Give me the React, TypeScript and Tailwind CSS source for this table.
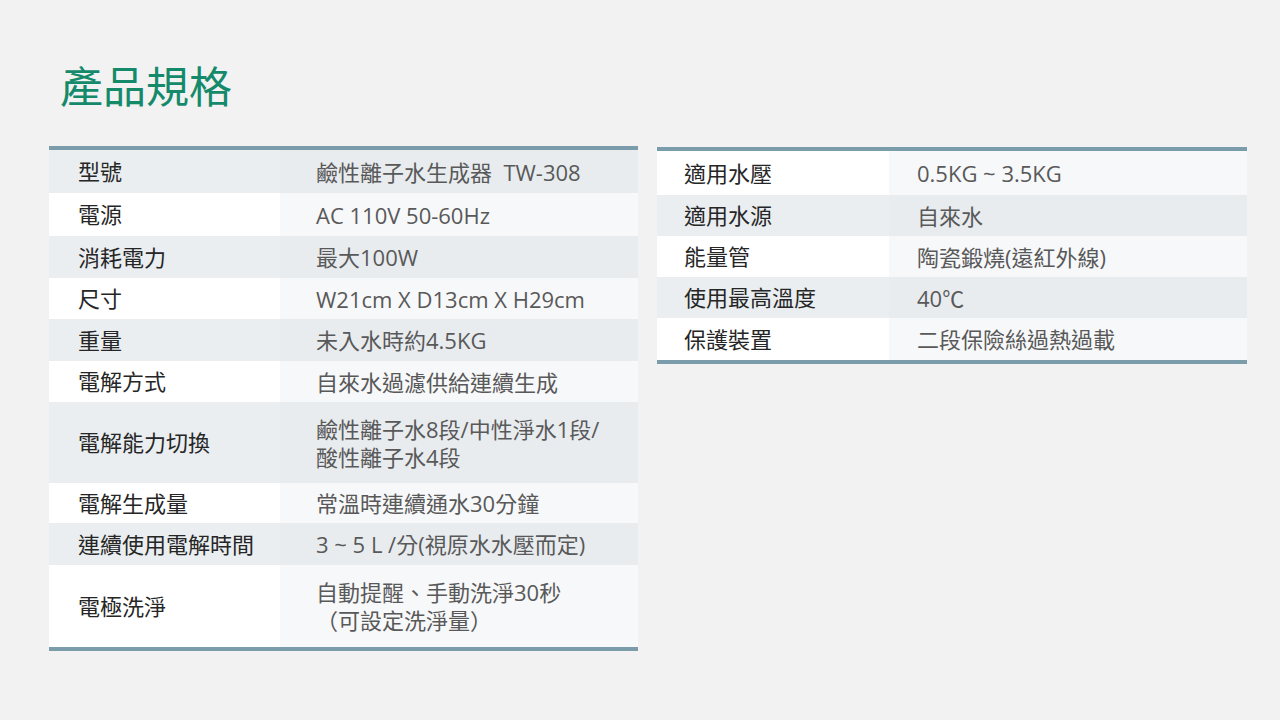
const font = "font-['Open_Sans','Noto_Sans_CJK_TC',sans-serif]";

type Row = { label: string; value: string[]; h: string; shade: boolean };

const leftRows: Row[] = [
  { label: "型號", value: ["鹼性離子水生成器  TW-308"], h: "h-[43px]", shade: true },
  { label: "電源", value: ["AC 110V 50-60Hz"], h: "h-[43px]", shade: false },
  { label: "消耗電力", value: ["最大100W"], h: "h-[42px]", shade: true },
  { label: "尺寸", value: ["W21cm X D13cm X H29cm"], h: "h-[41px]", shade: false },
  { label: "重量", value: ["未入水時約4.5KG"], h: "h-[42px]", shade: true },
  { label: "電解方式", value: ["自來水過濾供給連續生成"], h: "h-[41px]", shade: false },
  { label: "電解能力切換", value: ["鹼性離子水8段/中性淨水1段/", "酸性離子水4段"], h: "h-[81px]", shade: true },
  { label: "電解生成量", value: ["常溫時連續通水30分鐘"], h: "h-[40px]", shade: false },
  { label: "連續使用電解時間", value: ["3 ~ 5 L /分(視原水水壓而定)"], h: "h-[42px]", shade: true },
  { label: "電極洗淨", value: ["自動提醒、手動洗淨30秒", "（可設定洗淨量）"], h: "h-[82px]", shade: false },
];

const rightRows: Row[] = [
  { label: "適用水壓", value: ["0.5KG ~ 3.5KG"], h: "h-[44px]", shade: false },
  { label: "適用水源", value: ["自來水"], h: "h-[41px]", shade: true },
  { label: "能量管", value: ["陶瓷鍛燒(遠紅外線)"], h: "h-[41px]", shade: false },
  { label: "使用最高溫度", value: ["40℃"], h: "h-[41px]", shade: true },
  { label: "保護裝置", value: ["二段保險絲過熱過載"], h: "h-[42px]", shade: false },
];

function SpecTable({ rows, labelW, labelPad, valuePad }: { rows: Row[]; labelW: string; labelPad: string; valuePad: string }) {
  return (
    <div className="flex flex-col border-y-4 border-[#7b9dab]">
      {rows.map((r) => (
        <div key={r.label} className={`flex ${r.h}`}>
          <div
            className={`${labelW} ${labelPad} flex items-center shrink-0 text-[22px] font-normal text-[#262626] ${
              r.shade ? "bg-[#eaeef1]" : "bg-white"
            }`}
          >
            {r.label}
          </div>
          <div
            className={`flex-1 ${valuePad} flex flex-col justify-center text-[22px] leading-[28px] font-normal text-[#595959] ${
              r.shade ? "bg-[#e8ecef]" : "bg-[#f7f8f9]"
            }`}
          >
            {r.value.map((v) => (
              <div key={v} className="whitespace-pre">
                {v}
              </div>
            ))}
          </div>
        </div>
      ))}
    </div>
  );
}

export default function App() {
  return (
    <div className={`w-[1280px] h-[720px] bg-[#f2f2f2] ${font} overflow-hidden`}>
      <h1 className="pl-[60px] pt-[58px] text-[43px] leading-[58px] font-normal text-[#148a6b]">產品規格</h1>
      <div className="flex items-start gap-[19px] pl-[49px] mt-[30px]">
        <div className="w-[589px]">
          <SpecTable rows={leftRows} labelW="w-[231px]" labelPad="pl-[29px]" valuePad="pl-[36px]" />
        </div>
        <div className="w-[590px] mt-[1px]">
          <SpecTable rows={rightRows} labelW="w-[232px]" labelPad="pl-[27px]" valuePad="pl-[28px]" />
        </div>
      </div>
    </div>
  );
}
